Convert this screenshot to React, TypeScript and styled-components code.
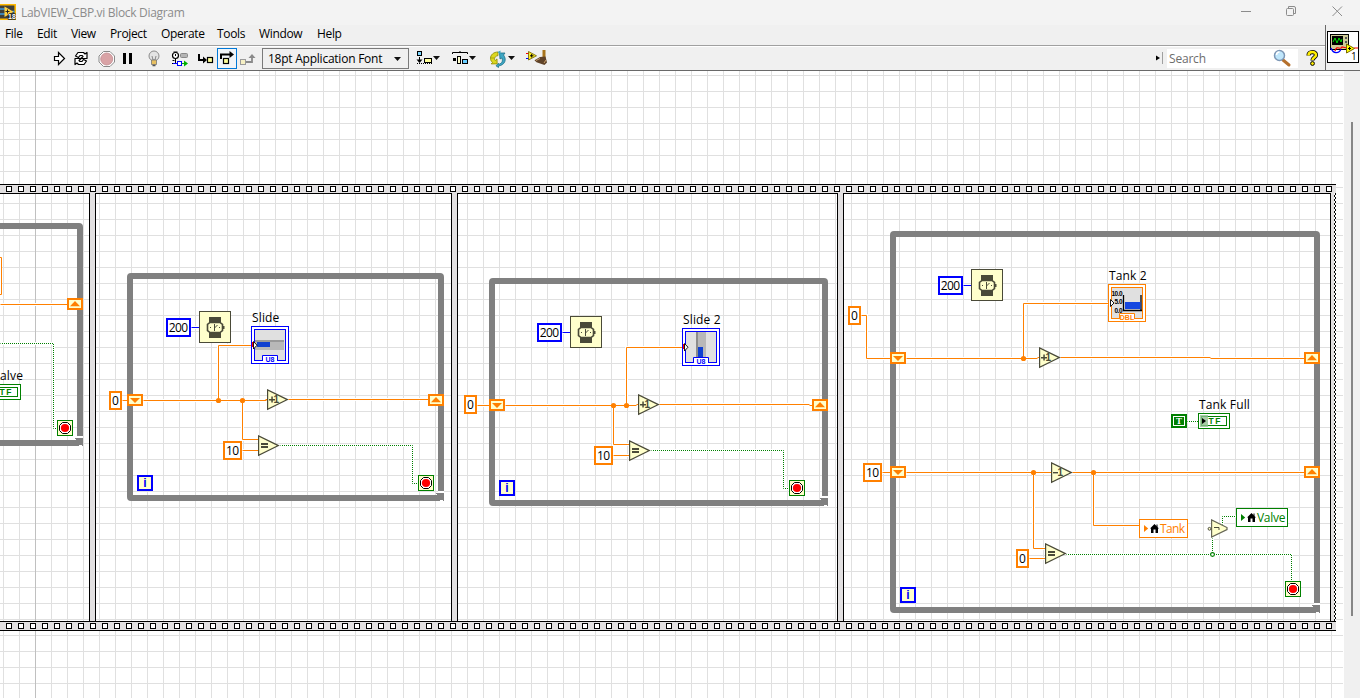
import React from "react";
import styled, { createGlobalStyle } from "styled-components";

const HEADER = 71;
const ORANGE = "#ff8000";
const GREEN = "#008000";
const BLUE = "#0000ff";
const CREAM = "#ffffcc";
const INK = "#4a4a38";
const UI_FONT = '"Open Sans", "Noto Sans", sans-serif';

const GlobalStyle = createGlobalStyle`
  * { box-sizing: border-box; }
  body { margin: 0; overflow: hidden; background: #fff; font-family: ${UI_FONT}; font-size: 12px; color: #000; }
  svg { display: block; }
`;

/* ---------- window chrome ---------- */

const Window = styled.div`
  width: 1360px;
  height: 698px;
  display: flex;
  flex-direction: column;
  overflow: hidden;
`;

const TitleBar = styled.div`
  height: 25px;
  flex: none;
  display: flex;
  align-items: flex-start;
  background: #f3f3f3;
  color: #8c8c8c;
`;

const AppIcon = styled.svg`
  margin-top: 4px;
`;

const Title = styled.span`
  margin-left: 5px;
  letter-spacing: -0.32px;
  line-height: 25px;
  white-space: nowrap;
`;

const WindowButtons = styled.div`
  margin-left: auto;
  width: 130px;
  height: 25px;
`;

const Bars = styled.div`
  height: 46px;
  flex: none;
  display: flex;
  background: #f0f0f0;
  border-bottom: 1px solid #696969;
`;

const BarStack = styled.div`
  width: 1325px;
  display: flex;
  flex-direction: column;
`;

const MenuBar = styled.div`
  height: 21px;
  display: flex;
  border-bottom: 1px solid #a0a0a0;
`;

const MenuItem = styled.span<{ $w: number }>`
  width: ${(p) => p.$w}px;
  padding-left: 5px;
  line-height: 18px;
  letter-spacing: -0.35px;
  white-space: nowrap;
`;

const Toolbar = styled.div`
  height: 24px;
  display: flex;
  align-items: flex-start;
  padding-left: 50px;
  border-top: 1px solid #fff;
`;

const Tool = styled.div<{ $w: number }>`
  width: ${(p) => p.$w}px;
  height: 23px;
  flex: none;
`;

const ActiveTool = styled.div`
  width: 20px;
  height: 21px;
  margin-top: 1px;
  border: 1px solid #0078d7;
  background: #f0f4f8;
`;

const FontPicker = styled.div`
  width: 147px;
  height: 21px;
  margin-top: 1px;
  padding: 0 7px 0 5px;
  display: flex;
  align-items: center;
  justify-content: space-between;
  border: 1px solid #7a7a7a;
  white-space: nowrap;
  letter-spacing: -0.24px;
  line-height: 18px;
`;

const Spacer = styled.div`
  flex: 1;
`;

const SearchBox = styled.div`
  width: 131px;
  height: 19px;
  margin: 2px 4px 0 3px;
  padding: 0 6px 0 2px;
  display: flex;
  align-items: center;
  justify-content: space-between;
  background: #fff;
  color: #6d6d6d;
  letter-spacing: -0.2px;
  line-height: 18px;
`;

const ConnectorPane = styled.div`
  width: 35px;
  padding: 6px 0 0 1px;
  border-left: 1px solid #696969;
`;

/* Toolbar glyph drawn with window coordinates, starting at column `x`. */
function Glyph({ x, y = 47, w, h = 23, children }: { x: number; y?: number; w: number; h?: number; children: React.ReactNode }) {
  return (
    <svg width={w} height={h} viewBox={`${x} ${y} ${w} ${h}`}>
      {children}
    </svg>
  );
}

const Caret = ({ x }: { x: number }) => <path d={`M${x} 56h7l-3.5 4z`} fill="#111" />;

/* ---------- canvas ---------- */

const Workspace = styled.div`
  flex: 1;
  display: flex;
  min-height: 0;
`;

const Canvas = styled.div`
  position: relative;
  width: 1343px;
  padding-top: 113px;
  overflow: hidden;
  background-color: #fff;
  background-image: linear-gradient(#c0c0c0, #c0c0c0), linear-gradient(to right, #e0e0e0 1px, transparent 1px),
    linear-gradient(#e0e0e0 1px, transparent 1px);
  background-size: 1px 100%, 16px 16px, 16px 16px;
  background-position: 35px 0, 3px 4px, 3px 4px;
  background-repeat: no-repeat, repeat, repeat;
`;

const ScrollTrack = styled.div`
  width: 16px;
  margin-left: 1px;
  padding: 51px 0 0 7px;
  background: #f0f0f0;
`;

const ScrollThumb = styled.div`
  width: 2px;
  height: 494px;
  background: #868686;
`;

const Film = styled.div`
  width: 1336px;
  height: 447px;
  display: flex;
  flex-direction: column;
`;

const PerforationStrip = styled.div`
  height: 10px;
  flex: none;
  display: flex;
  align-items: center;
  gap: 6px;
  padding-left: 6px;
  border: solid #000;
  border-width: 1px 0;
  background: #e2e0e1;
`;

const Hole = styled.i`
  width: 6px;
  height: 6px;
  flex: none;
  border: 1px solid #000;
  background: #fff;
`;

const Frames = styled.div`
  flex: 1;
  display: flex;
`;

const Frame = styled.div<{ $w: number }>`
  width: ${(p) => p.$w}px;
  flex: none;
`;

const FrameDivider = styled.div`
  width: 7px;
  flex: none;
  margin: -1px 0;
  border: solid #000;
  border-width: 0 1px;
  background: #e2e0e1;
`;

const FilmEdge = styled.div`
  width: 6px;
  margin: -1px 0;
  flex: none;
  border-left: 1px solid #000;
  background: conic-gradient(#000 25%, #fff 0 50%, #000 0 75%, #fff 0) right top / 2px 4px repeat-y, #e2e0e1;
`;

const at = (x: number, y: number) => `position: absolute; left: ${x}px; top: ${y - HEADER}px;`;
type Pos = { $x: number; $y: number };

const LoopFrame = styled.div<Pos & { $w: number; $h: number }>`
  ${(p) => at(p.$x, p.$y)}
  width: ${(p) => p.$w}px;
  height: ${(p) => p.$h}px;
  border: 6px solid #808080;
  border-radius: 4px 4px 0 4px;
`;

const LoopCorner = styled.svg`
  position: absolute;
  right: -6px;
  bottom: -6px;
`;

const WireLayer = styled.svg`
  position: absolute;
  left: 0;
  top: 0;
`;

const Constant = styled.div<Pos & { $w: number; $color: string }>`
  ${(p) => at(p.$x, p.$y)}
  width: ${(p) => p.$w}px;
  height: 19px;
  border: 2px solid ${(p) => p.$color};
  background: #fff;
  line-height: 16px;
  letter-spacing: -0.6px;
  text-indent: -0.6px;
  white-space: nowrap;
  display: flex;
  justify-content: center;
`;

const IterationTerminal = styled.div<Pos>`
  ${(p) => at(p.$x, p.$y)}
  width: 16px;
  height: 16px;
  border: 2px solid ${BLUE};
  background: ${CREAM};
  color: ${BLUE};
  font: bold 12px/13px "Liberation Sans", sans-serif;
  text-align: center;
`;

const Label = styled.div<Pos>`
  ${(p) => at(p.$x, p.$y)}
  line-height: 16px;
  letter-spacing: 0.15px;
  white-space: nowrap;
`;

const NodeSvg = styled.svg<Pos>`
  ${(p) => at(p.$x, p.$y)}
`;

const LocalVariable = styled.div<Pos & { $w: number; $color: string; $tracking: number }>`
  ${(p) => at(p.$x, p.$y)}
  width: ${(p) => p.$w}px;
  height: 19px;
  padding-left: 4px;
  display: flex;
  align-items: center;
  border: 1px solid ${(p) => p.$color};
  background: #fff;
  color: ${(p) => p.$color};
  line-height: 17px;
  letter-spacing: ${(p) => p.$tracking}px;
`;

const VariableName = styled.span`
  margin-left: 1px;
`;

function Loop({ x, y, right, bottom }: { x: number; y: number; right: number; bottom: number }) {
  return (
    <LoopFrame $x={x} $y={y} $w={right - x} $h={bottom - y}>
      <LoopCorner width="8" height="10" viewBox="0 0 8 10" shapeRendering="crispEdges">
        <path d="M2 0h6v10H2z" fill="#fff" />
        <path d="M0 2h8v8h-1v-1H4v1H0V4h1V3H0z" fill="#808080" />
      </LoopCorner>
    </LoopFrame>
  );
}

function ShiftRegister({ x, y, up }: { x: number; y: number; up?: boolean }) {
  return (
    <NodeSvg $x={x} $y={y} width="16" height="12">
      <rect x="1" y="1" width="14" height="10" fill={CREAM} stroke={ORANGE} strokeWidth="2" />
      <path d={up ? "M3 8.200h10L8 3z" : "M3 4h10L8 9z"} fill={ORANGE} />
    </NodeSvg>
  );
}

function WaitTimer({ x, y }: { x: number; y: number }) {
  return (
    <NodeSvg $x={x} $y={y} width="32" height="32">
      <rect x=".5" y=".5" width="31" height="31" fill={CREAM} stroke={INK} />
      <path d="M10 6h12v6H10zM10 21h12v6H10z" fill={INK} />
      <path d="M11 11.500h10l2.500 2v6l-2.500 2H11l-2.500-2v-6z" fill={CREAM} stroke={INK} strokeWidth="1.600" />
      <path d="M24 15h1.500v3H24z" fill={INK} />
      <path d="M15.500 13v6.500M15.500 17l3-3" stroke={INK} fill="none" />
      <path d="M11 16h1v1h-1zM20 16h1v1h-1zM15 19h1v1h-1z" fill={INK} />
    </NodeSvg>
  );
}

function Operator({ x, y, kind }: { x: number; y: number; kind: "+1" | "-1" | "=" }) {
  return (
    <NodeSvg $x={x} $y={y} width="22" height="22">
      <path d="M.6 .9V20.300L20.400 10.600z" fill={CREAM} stroke={INK} strokeWidth="1.200" />
      {kind === "=" ? (
        <path d="M3 8h7v2H3zM3 11h7v2H3z" fill={INK} />
      ) : (
        <>
          <path d={kind === "+1" ? "M2 10h6v1.400H2zM4.300 7.600h1.500v6H4.300z" : "M2 10h5v1.400H2z"} fill={INK} />
          <text x="6.600" y="14.200" fontFamily="Liberation Sans, sans-serif" fontSize="10" fontWeight="bold" fill={INK}>
            1
          </text>
        </>
      )}
    </NodeSvg>
  );
}

function StopTerminal({ x, y }: { x: number; y: number }) {
  return (
    <NodeSvg $x={x} $y={y} width="16" height="16">
      <rect x=".5" y=".5" width="15" height="15" fill={CREAM} stroke={GREEN} />
      <path d="M5.500 2.500h5l3 3v5l-3 3h-5l-3-3v-5z" fill="#fff" stroke="#000" />
      <circle cx="8" cy="8" r="4.100" fill="#f00" />
    </NodeSvg>
  );
}

function IconTerminal({ x, y, color, type, children }: { x: number; y: number; color: string; type: string; children?: React.ReactNode }) {
  return (
    <NodeSvg $x={x} $y={y} width="38" height="38">
      <rect x=".5" y=".5" width="37" height="37" fill="#fff" stroke={color} />
      <rect x="3.500" y="3.500" width="31" height="31" fill="#e0e0e0" stroke={color} />
      {children}
      <path d="M11.500 35V29.500h15V35" fill="#fff" stroke={color} />
      <path d="M12 34h14v2H12z" fill="#fff" />
      <text x="19" y="36" textAnchor="middle" fontFamily="Liberation Sans, sans-serif" fontWeight="bold" fontSize="7" fill={color}>
        {type}
      </text>
    </NodeSvg>
  );
}

const BooleanType = () => (
  <text x="10.500" y="11" fontSize="8.500" fontWeight="bold" letterSpacing="1.500" fontFamily="Liberation Sans, sans-serif" fill={GREEN}>
    TF
  </text>
);

const House = () => (
  <svg width="9" height="9" viewBox="0 0 9 9">
    <path d="M4.500 0L9 4.500H8V9H5.500V5.500h-2V9H1V4.500H0z" fill="#000" />
    <path d="M6.500 .5h1V3h-1z" fill="#000" />
  </svg>
);

const Pointer = ({ color }: { color: string }) => (
  <svg width="6" height="7" viewBox="0 0 6 7">
    <path d="M0 0v7l4.200-3.500z" fill={color} />
  </svg>
);

const orangeWires = [
  "M0 304H67",
  "M122 400H127M143 400H266M265 399H267M288 399H428",
  "M218 400V345H251",
  "M242 400V439H258",
  "M242 450H258",
  "M477 405H489M505 405H636M636 404H638M659 404H809M809 405H812",
  "M626 405V347H682",
  "M613 405V444H629",
  "M613 455H629",
  "M861 315H866V358H890",
  "M906 358H1037M1037 357H1039M1060 357H1210M1210 358H1304",
  "M1023 358V303H1108",
  "M882 472H890M906 472H1051M1072 472H1304",
  "M1033 472V548H1045",
  "M1029 558H1045",
  "M1093 472V525H1139",
];
const greenWires = [
  "M0 343H53V428H57",
  "M280 445H412V483H418",
  "M651 450H783V488H789",
  "M1187 421H1198",
  "M1066 554H1291V581",
  "M1212 538V554",
  "M1222 524V516H1236",
];
const blueWires = ["M191 327H199", "M562 332H570", "M963 285H971"];
const junctions = [
  [218, 400],
  [242, 400],
  [613, 405],
  [626, 405],
  [1023, 358],
  [1033, 472],
  [1093, 472],
];

function Wires() {
  const all = [...orangeWires, ...greenWires, ...blueWires].join("");
  return (
    <WireLayer width="1343" height="627" viewBox={`0 ${HEADER} 1343 627`}>
      <g transform="translate(.5 .5)" fill="none">
        <path d={all} stroke="#fff" strokeWidth="3" />
        <path d={orangeWires.join("")} stroke={ORANGE} />
        <path d={blueWires.join("")} stroke={BLUE} />
        {greenWires.map((d) => (
          <path key={d} d={d} stroke={GREEN} strokeDasharray="1 1" strokeDashoffset=".5" />
        ))}
        {junctions.map(([x, y]) => (
          <circle key={`${x}-${y}`} cx={x} cy={y} r="2.600" fill={ORANGE} />
        ))}
        <circle cx="1212" cy="554" r="1.900" fill="#fff" stroke={GREEN} strokeWidth="1.200" />
      </g>
    </WireLayer>
  );
}

const menus: [string, number][] = [
  ["File", 32],
  ["Edit", 34],
  ["View", 39],
  ["Project", 51],
  ["Operate", 56],
  ["Tools", 42],
  ["Window", 58],
  ["Help", 40],
];

function MenuAndTools() {
  return (
    <Bars>
      <BarStack>
        <MenuBar>
          {menus.map(([m, w]) => (
            <MenuItem key={m} $w={w}>
              {m}
            </MenuItem>
          ))}
        </MenuBar>
        <Toolbar>
          <Tool $w={20}>
            <Glyph x={50} w={20}>
              <path d="M54.500 56.500h4v-4l6 6-6 6v-4h-4z" fill="#fff" stroke="#000" strokeWidth="1.200" />
            </Glyph>
          </Tool>
          <Tool $w={24}>
            <Glyph x={70} w={24}>
              <g fill="#fff" stroke="#000" strokeWidth="1.200" strokeLinejoin="round">
                <path id="cycle" d="M75.500 56l2.500-3.500h5.500l1.500 1.500 2-1.500v6h-6l2-2-1-1h-2l-1.500 2z" />
                <path d="M86.500 61l-2.500 3.500h-5.500l-1.500-1.500-2 1.500v-6h6l-2 2 1 1h2l1.500-2z" />
              </g>
            </Glyph>
          </Tool>
          <Tool $w={24}>
            <Glyph x={94} w={24}>
              <path d="M103.500 51.500h6.500l4.500 4.500v6l-4.500 4.500h-6.500l-4.500-4.500v-6z" fill="#fff" stroke="#8a8a8a" />
              <circle cx="106.700" cy="59" r="6" fill="#d9a3a6" stroke="#c08c90" strokeWidth=".8" />
            </Glyph>
          </Tool>
          <Tool $w={24}>
            <Glyph x={118} w={24}>
              <path d="M123 53h3v11h-3zM129 53h3v11h-3z" fill="#000" />
            </Glyph>
          </Tool>
          <Tool $w={24}>
            <Glyph x={142} w={24}>
              <circle cx="154" cy="56" r="5" fill="#e3e3e3" stroke="#8c8c8c" />
              <path d="M152 56l1 4h2l1-4" fill="none" stroke="#888" />
              <path d="M151.500 60h5v4.500h-5z" fill="#e8c060" stroke="#777" strokeWidth=".8" />
              <path d="M152.500 65.500h3" stroke="#555" strokeWidth="1.500" />
            </Glyph>
          </Tool>
          <Tool $w={28}>
            <Glyph x={166} w={28}>
              <circle cx="175.500" cy="55.500" r="3" fill="#fff" stroke="#000" strokeWidth="1.200" />
              <path d="M173.500 52h4M175.500 56v-2M175.500 59v4M172 63.500h5M172.500 60.500h2" stroke="#000" fill="none" />
              <rect x="180.500" y="53.500" width="7" height="4" rx="1" fill="#b4b4b4" stroke="#888" />
              <path d="M173 63.500h9" stroke="#00f" />
              <rect x="177.500" y="61.500" width="4" height="4" fill="#fff" stroke="#00f" />
              <path d="M182 63h2v-2.500l4 3-4 3V64h-2z" fill="#00b000" />
            </Glyph>
          </Tool>
          <Tool $w={23}>
            <Glyph x={194} w={23}>
              <path d="M199 54v6h5" stroke="#000" strokeWidth="2" fill="none" />
              <path d="M203 56.500v7l4-3.500z" fill="#000" />
              <rect x="207.500" y="57.500" width="5" height="5" fill="#ff9" stroke="#000" strokeWidth="1.200" />
            </Glyph>
          </Tool>
          <ActiveTool>
            <Glyph x={218} y={49} w={18} h={19}>
              <path d="M221 59v-4.500h9" stroke="#000" strokeWidth="2" fill="none" />
              <path d="M229.500 51v7l4.500-3.500z" fill="#000" />
              <rect x="223.500" y="58.500" width="5" height="5" fill="#ff9" stroke="#000" strokeWidth="1.200" />
            </Glyph>
          </ActiveTool>
          <Tool $w={25}>
            <Glyph x={237} w={25}>
              <rect x="240.500" y="59.500" width="5" height="5" fill="#f6f0c4" stroke="#9a9a9a" />
              <path d="M246 62h6v-4" stroke="#8a8a8a" strokeWidth="1.800" fill="none" />
              <path d="M248.500 58h7l-3.500-4z" fill="#8a8a8a" />
            </Glyph>
          </Tool>
          <FontPicker>
            18pt Application Font
            <svg width="7" height="4">
              <path d="M0 0h7l-3.500 4z" fill="#111" />
            </svg>
          </FontPicker>
          <Tool $w={34}>
            <Glyph x={409} w={34}>
              <rect x="417.500" y="51.500" width="4" height="4" fill="#7fd8ff" stroke="#000" />
              <path d="M419.500 57v4" stroke="#000" />
              <path d="M417 63.500h15" stroke="#000" strokeDasharray="1 1" />
              <path d="M416.500 59.500h6l-3 3.500z" fill="#000" />
              <rect x="424.500" y="58.500" width="7" height="4" fill="#ff9" stroke="#000" />
              <Caret x={433} />
            </Glyph>
          </Tool>
          <Tool $w={39}>
            <Glyph x={443} w={39}>
              <path d="M452.500 54v-1.500h15V54M460 52.500v-1.500" stroke="#000" fill="none" />
              <path d="M453 58h3v3h-3z" fill="#000" />
              <rect x="457.500" y="56.500" width="3" height="7" fill="#ffc" stroke="#000" />
              <rect x="462.500" y="59.500" width="5" height="4" fill="#6cf" stroke="#000" />
              <Caret x={469} />
            </Glyph>
          </Tool>
          <Tool $w={38}>
            <Glyph x={482} w={38}>
              <path d="M498 52c-4.500 0-7.500 3-7.500 6.200 0 1.800.7 3.200 2 4.200l-1.300 1.500h6l-.2-5-1.700 1.600c-1.500-1.400-.8-4.300 2.700-4.900z" fill="#dcd820" stroke="#8a8600" strokeWidth=".8" />
              <path d="M490.500 58h3.500" stroke="#8a8600" strokeWidth=".6" />
              <path d="M496 65.800l2.500-2.500v1c4-.8 4.500-4 3.300-6.300l-1.800 1-.5-6h5.500l-1.500 2c3.500 4.500 1.500 10-5 11v1.500z" fill="#3fa7c4" stroke="#1c6f88" strokeWidth=".8" />
              <path d="M497.500 52l3-1.500v4z" fill="#3fa7c4" />
              <Caret x={508} />
            </Glyph>
          </Tool>
          <Tool $w={32}>
            <Glyph x={520} w={32}>
              <path d="M526 53.500h3" stroke="#f00" />
              <path d="M526 58.500h3" stroke="#00f" />
              <path d="M528.500 51.500v8.500l8-4.200z" fill="#ffee20" stroke="#6b5a00" strokeWidth=".8" />
              <path d="M530 55.800h3.500M531.700 54v3.500" stroke="#000" />
              <path d="M542.500 50h3v8.500h-3z" fill="#a8741c" />
              <path d="M540 57l5.500-.5 1.500 6-2.500 2.500-8-2.800-2-2z" fill="#5f4228" />
              <path d="M536 60.500l4-2M544 63l2-3" stroke="#c9a06a" />
            </Glyph>
          </Tool>
          <Spacer />
          <Tool $w={14}>
            <Glyph x={1150} w={14}>
              <path d="M1156 55.500v5l4-2.500z" fill="#000" />
              <path d="M1162.500 52v12" stroke="#a0a0a0" />
            </Glyph>
          </Tool>
          <SearchBox>
            Search
            <Glyph x={1273} y={49} w={19} h={19}>
              <path d="M1283 60l6 5" stroke="#b5702c" strokeWidth="3" strokeLinecap="round" />
              <circle cx="1279.500" cy="55.500" r="5" fill="#bfe6fb" stroke="#7d97b5" strokeWidth="1.500" />
              <path d="M1276.500 55a3 3 0 0 1 3-3" stroke="#fff" strokeWidth="1.500" fill="none" />
            </Glyph>
          </SearchBox>
          <Tool $w={23}>
            <Glyph x={1302} w={23}>
              <path d="M1308.500 55.500c0-4.500 7.500-4.500 7.500-.5 0 2.500-3.500 2.500-3.500 5.500" stroke="#000" strokeWidth="4.200" fill="none" />
              <path d="M1308.500 55.500c0-4.500 7.500-4.500 7.500-.5 0 2.500-3.500 2.500-3.500 5" stroke="#ffee00" strokeWidth="2.600" fill="none" />
              <circle cx="1312.500" cy="63.500" r="1.900" fill="#fe0" stroke="#000" />
            </Glyph>
          </Tool>
        </Toolbar>
      </BarStack>
      <ConnectorPane>
        <svg width="32" height="32">
          <rect x=".5" y=".5" width="31" height="31" fill="#fff" stroke="#000" />
          <rect x="3.500" y="3.500" width="18" height="15" fill="#cfcb98" stroke="#000" />
          <rect x="5" y="5" width="11" height="9" fill="#000" />
          <path d="M6 11l2-4 2 5 2-5 2 4 1-3" stroke="#0d0" fill="none" />
          <path d="M18 6h2v2h-2zM18 10h2v2h-2z" fill="#555" />
          <path d="M4 17c2 6 8 6 10 1" stroke="#00f" strokeWidth="1.300" fill="none" />
          <path d="M8 20c2-7 5 0 7-4l5 1M27 17h4" stroke="#f00" strokeWidth="1.200" fill="none" />
          <path d="M19.500 13v9l8-4.500z" fill="#ff0" stroke="#7a6a00" />
          <path d="M21 17.500h3M22.500 16v3" stroke="#000" />
          <text x="24" y="29" fontSize="10" fontFamily={UI_FONT}>
            1
          </text>
        </svg>
      </ConnectorPane>
    </Bars>
  );
}

const SliderArrow = () => (
  <>
    <path d="M1 16h3v5H1z" fill="#f00" />
    <path d="M2.500 15.500l3.500 3.700-3.500 3.800z" fill="#fff" stroke="#000" strokeWidth=".9" />
  </>
);

export default function App() {
  return (
    <Window>
      <GlobalStyle />
      <TitleBar>
        <AppIcon width="16" height="16">
          <path d="M-1 .8h16.200v14.400H-1" fill="#3f3f3b" stroke="#ffb800" strokeWidth="1.600" />
          <path d="M0 5h5M0 10h5M12 7.500h2.500" stroke="#3f9be0" strokeWidth="1.600" />
          <path d="M4.500 2.500v10.500l9-5.300z" fill="#ffd040" />
          <path d="M5.500 7.500h4M7.500 5.500v4" stroke="#222" />
          <text x="8" y="14.500" fontSize="7" fontWeight="bold" fill="#fff" stroke="#222" strokeWidth="1.500" paintOrder="stroke" fontFamily="Liberation Sans, sans-serif">
            18
          </text>
        </AppIcon>
        <Title>LabVIEW_CBP.vi Block Diagram</Title>
        <WindowButtons>
          <svg width="130" height="25" viewBox="1230 0 130 25" fill="none" stroke="#8c8c8c">
            <path d="M1241 11.500h10" />
            <rect x="1286.500" y="8.500" width="7" height="7" rx="1" />
            <path d="M1288.500 8V6.500h5.500a1.500 1.500 0 0 1 1.500 1.500v5.500h-1.500" />
            <path d="M1332.500 6.500l9.500 9.500M1342 6.500l-9.500 9.500" />
          </svg>
        </WindowButtons>
      </TitleBar>
      <MenuAndTools />

      <Workspace>
        <Canvas>
          <Film>
            <PerforationStrip>
              {Array.from({ length: 111 }, (_, i) => (
                <Hole key={i} />
              ))}
            </PerforationStrip>
            <Frames>
              <Frame $w={89} />
              <FrameDivider />
              <Frame $w={355} />
              <FrameDivider />
              <Frame $w={379} />
              <FrameDivider />
              <Frame $w={486} />
              <FilmEdge />
            </Frames>
            <PerforationStrip>
              {Array.from({ length: 111 }, (_, i) => (
                <Hole key={i} />
              ))}
            </PerforationStrip>
          </Film>

          <Loop x={-60} y={223} right={83} bottom={446} />
          <Loop x={127} y={273} right={444} bottom={501} />
          <Loop x={489} y={278} right={828} bottom={506} />
          <Loop x={890} y={231} right={1320} bottom={613} />
          <Wires />

          {/* first frame */}
          <NodeSvg $x={0} $y={257} width="2" height="38">
            <path d="M0 .5H1.500V37.500H0" fill="#fff" stroke={ORANGE} />
          </NodeSvg>
          <ShiftRegister x={67} y={298} up />
          <Label $x={0} $y={368}>alve</Label>
          <NodeSvg $x={-11} $y={384} width="32" height="16">
            <rect x=".5" y=".5" width="31" height="15" fill="#fff" stroke={GREEN} />
            <rect x="3.500" y="3.500" width="25" height="9" fill="#fff" stroke={GREEN} />
            <BooleanType />
          </NodeSvg>
          <StopTerminal x={57} y={420} />

          {/* second frame */}
          <Constant $x={166} $y={318} $w={25} $color={BLUE}>200</Constant>
          <WaitTimer x={199} y={311} />
          <Label $x={252} $y={310}>Slide</Label>
          <IconTerminal x={251} y={326} color={BLUE} type="U8">
            <path d="M4 14h29v10H4z" fill="#b8b8b8" />
            <path d="M4 14h29v2H4z" fill="#999" />
            <path d="M6 16h13v5H6z" fill="#1040d0" />
            <SliderArrow />
          </IconTerminal>
          <Constant $x={109} $y={391} $w={13} $color={ORANGE}>0</Constant>
          <ShiftRegister x={127} y={394} />
          <ShiftRegister x={428} y={394} up />
          <Operator x={267} y={389} kind="+1" />
          <Constant $x={223} $y={441} $w={19} $color={ORANGE}>10</Constant>
          <Operator x={258} y={435} kind="=" />
          <IterationTerminal $x={137} $y={475}>i</IterationTerminal>
          <StopTerminal x={418} y={475} />

          {/* third frame */}
          <Constant $x={537} $y={323} $w={25} $color={BLUE}>200</Constant>
          <WaitTimer x={570} y={316} />
          <Label $x={683} $y={312}>Slide 2</Label>
          <IconTerminal x={682} y={328} color={BLUE} type="U8">
            <path d="M14 4h10v25H14z" fill="#b8b8b8" />
            <path d="M14 4h2v25h-2z" fill="#8c8c8c" />
            <path d="M16 19h5v10h-5z" fill="#1040d0" />
            <SliderArrow />
          </IconTerminal>
          <Constant $x={464} $y={395} $w={13} $color={ORANGE}>0</Constant>
          <ShiftRegister x={489} y={399} />
          <ShiftRegister x={812} y={399} up />
          <Operator x={638} y={394} kind="+1" />
          <Constant $x={594} $y={446} $w={19} $color={ORANGE}>10</Constant>
          <Operator x={629} y={440} kind="=" />
          <IterationTerminal $x={499} $y={480}>i</IterationTerminal>
          <StopTerminal x={789} y={480} />

          {/* fourth frame */}
          <Constant $x={938} $y={276} $w={25} $color={BLUE}>200</Constant>
          <WaitTimer x={971} y={269} />
          <Label $x={1109} $y={268}>Tank 2</Label>
          <IconTerminal x={1108} y={284} color={ORANGE} type="DBL">
            <g fontFamily="Liberation Sans, sans-serif" fontSize="6.500" fontWeight="bold" letterSpacing="-.5">
              <text x="3.500" y="12">10.0</text>
              <text x="6.500" y="20">5.0</text>
              <text x="6.500" y="28.800">0.0</text>
            </g>
            <path d="M15.500 11v15.500H34M33 11v15" stroke="#000" strokeWidth="1.300" fill="none" />
            <path d="M17 18H32.500v7H17z" fill="#1547e0" />
            <path d="M2.500 15.500v7l3.500-3.500z" fill="#fff" stroke="#000" strokeWidth=".9" />
          </IconTerminal>
          <Constant $x={848} $y={306} $w={13} $color={ORANGE}>0</Constant>
          <ShiftRegister x={890} y={352} />
          <ShiftRegister x={1304} y={352} up />
          <Operator x={1039} y={347} kind="+1" />
          <Label $x={1199} $y={397}>Tank Full</Label>
          <NodeSvg $x={1171} $y={414} width="16" height="14">
            <rect width="16" height="14" fill={GREEN} />
            <rect x="2.500" y="2.500" width="11" height="9" fill={GREEN} stroke="#fff" />
            <text x="8" y="10" textAnchor="middle" fontSize="9" fontWeight="bold" fontFamily="Liberation Serif, serif" fill="#fff">
              T
            </text>
          </NodeSvg>
          <NodeSvg $x={1198} $y={413} width="32" height="16">
            <rect x=".5" y=".5" width="31" height="15" fill="#fff" stroke={GREEN} />
            <rect x="3.500" y="3.500" width="25" height="9" fill="#fff" stroke={GREEN} />
            <path d="M2 2h8v12H2z" fill="#8fbf8f" fillOpacity=".8" />
            <path d="M4 5v6l4-3z" fill="#000" />
            <BooleanType />
          </NodeSvg>
          <Constant $x={863} $y={463} $w={19} $color={ORANGE}>10</Constant>
          <ShiftRegister x={890} y={466} />
          <ShiftRegister x={1304} y={466} up />
          <Operator x={1051} y={462} kind="-1" />
          <LocalVariable $x={1139} $y={519} $w={49} $color={ORANGE} $tracking={-0.6}>
            <Pointer color={ORANGE} />
            <House />
            <VariableName>Tank</VariableName>
          </LocalVariable>
          <LocalVariable $x={1236} $y={508} $w={52} $color={GREEN} $tracking={-0.3}>
            <Pointer color={GREEN} />
            <House />
            <VariableName>Valve</VariableName>
          </LocalVariable>
          <NodeSvg $x={1206} $y={519} width="24" height="19">
            <path d="M5.600 .9V18L21 10.500V8.500z" fill={CREAM} stroke="#666655" strokeWidth="1.200" />
            <circle cx="3.500" cy="9.800" r="1.400" fill={CREAM} stroke={INK} />
            <path d="M8 8.500h5v2.500" stroke={INK} fill="none" />
          </NodeSvg>
          <Constant $x={1016} $y={549} $w={13} $color={ORANGE}>0</Constant>
          <Operator x={1045} y={543} kind="=" />
          <IterationTerminal $x={900} $y={587}>i</IterationTerminal>
          <StopTerminal x={1285} y={581} />
        </Canvas>
        <ScrollTrack>
          <ScrollThumb />
        </ScrollTrack>
      </Workspace>
    </Window>
  );
}
